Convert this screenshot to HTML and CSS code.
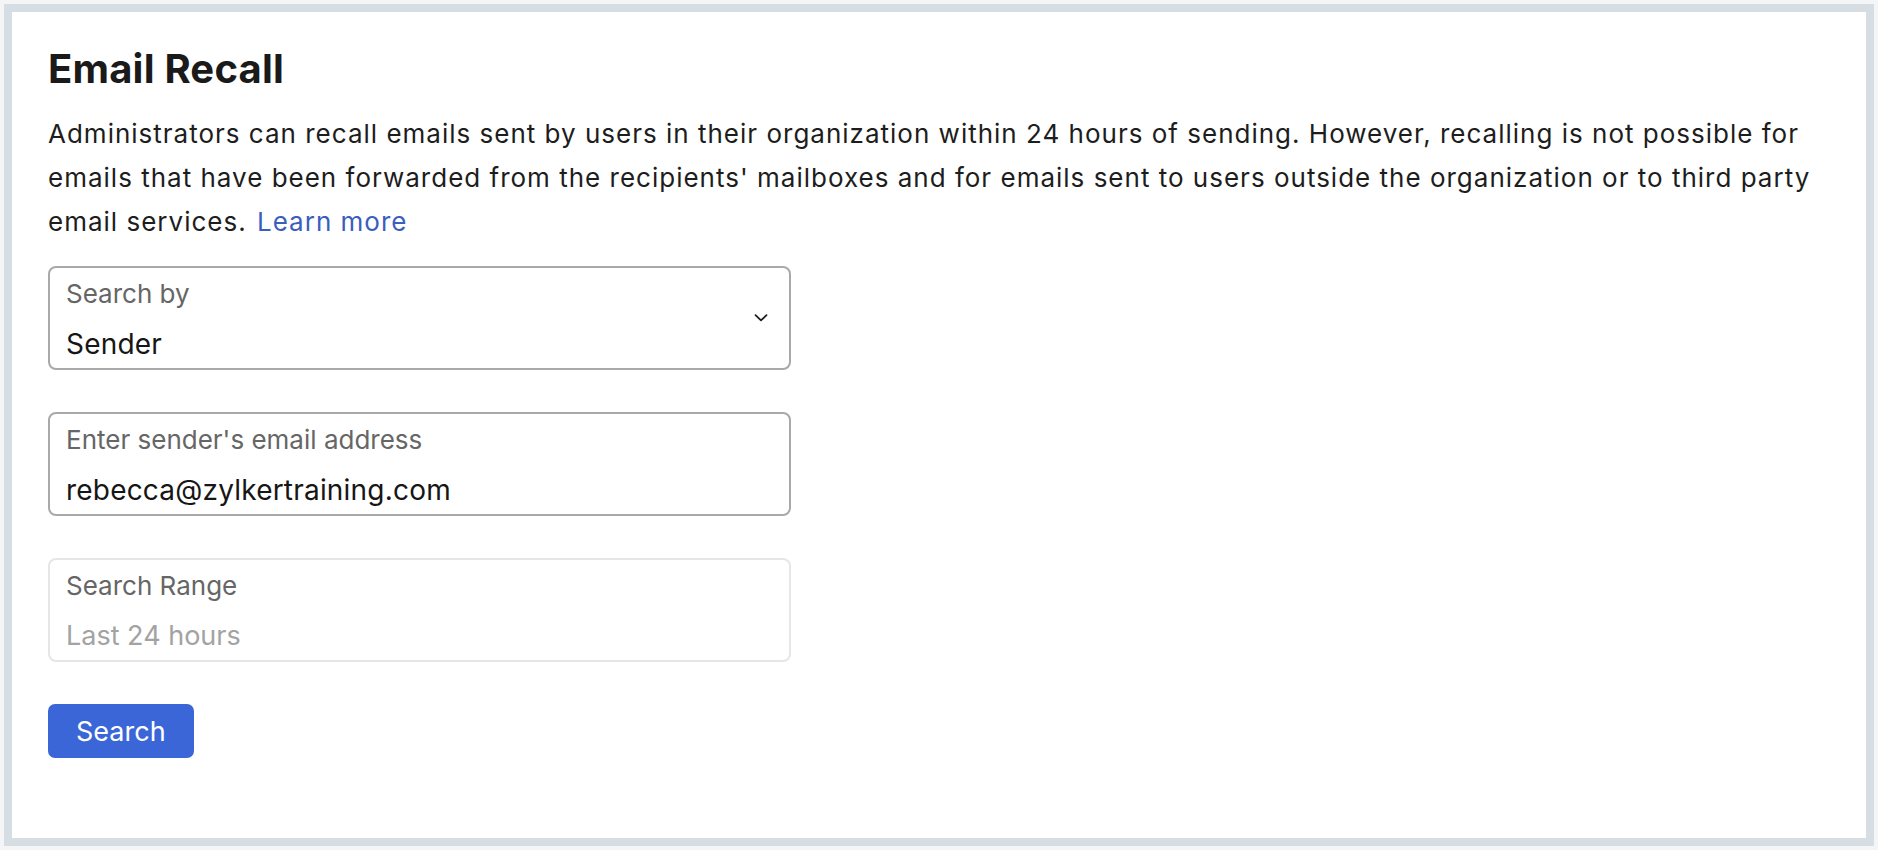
FILE: index.html
```html
<!DOCTYPE html>
<html lang="en">

<head>
    <meta charset="UTF-8">
    <meta name="viewport" content="width=device-width, initial-scale=1.0">
    <title>Email Recall</title>
    <link rel="stylesheet" href="styles.css">
</head>

<body>
    <div class="panel">
        <h1>Email Recall</h1>
        <p class="intro">Administrators can recall emails sent by users in their organization within 24 hours of sending. However, recalling is not possible for emails that have been forwarded from the recipients' mailboxes and for emails sent to users outside the organization or to third party email services. <a href="#" class="learn-more">Learn more</a></p>

        <div class="field field-select">
            <div class="field-body">
                <div class="field-label">Search by</div>
                <div class="field-value">Sender</div>
            </div>
            <svg class="chevron" width="14" height="8" viewBox="0 0 14 8">
                <path d="M1.5 1.2 L7 6.4 L12.5 1.2" fill="none" stroke="#1d1d1d" stroke-width="1.8" stroke-linecap="round" stroke-linejoin="round" />
            </svg>
        </div>

        <div class="field">
            <div class="field-body">
                <div class="field-label">Enter sender's email address</div>
                <div class="field-value">rebecca@zylkertraining.com</div>
            </div>
        </div>

        <div class="field field-disabled">
            <div class="field-body">
                <div class="field-label">Search Range</div>
                <div class="field-value">Last 24 hours</div>
            </div>
        </div>

        <button type="button" class="search-btn">Search</button>
    </div>
</body>

</html>
```

FILE: styles.css
```css
html,
body {
    height: 100%;
}

body {
    font-family: Inter, "Noto Sans", sans-serif;
    background-color: #f3f5f7;
    color: #1b1b1b;
    margin: 0;
    padding: 4px;
    box-sizing: border-box;
}

.panel {
    background-color: #fff;
    border: 8px solid #d6dee4;
    height: 100%;
    box-sizing: border-box;
    padding: 33px 36px;
}

h1 {
    font-size: 40px;
    line-height: 48px;
    font-weight: 700;
    letter-spacing: 0.2px;
    margin: 0 0 19px;
    color: #1a1a1a;
}

.intro {
    font-size: 26px;
    line-height: 44px;
    letter-spacing: 1px;
    margin: 0 0 22px;
    color: #1d1d1d;
}

.learn-more {
    color: #3a5ebd;
    text-decoration: none;
    margin-left: 2px;
}

.field {
    display: flex;
    align-items: center;
    width: 743px;
    height: 104px;
    box-sizing: border-box;
    border: 2px solid #a9a9a9;
    border-radius: 8px;
    padding: 0 21px 0 16px;
    margin-bottom: 42px;
}

.field-body {
    flex: 1;
    align-self: stretch;
    padding-top: 10px;
}

.field-label {
    font-size: 26px;
    line-height: 32px;
    color: #666;
}

.field-value {
    font-size: 28px;
    line-height: 36px;
    letter-spacing: 0.2px;
    margin-top: 16px;
    color: #161616;
}

.field-disabled {
    border: 2px solid #e6e6e6;
}

.field-disabled .field-value {
    font-size: 27px;
    letter-spacing: 0;
    color: #a3a3a3;
}

.chevron {
    flex-shrink: 0;
}

.search-btn {
    font-family: inherit;
    font-size: 27px;
    height: 54px;
    padding: 0 28px;
    background-color: #3b66d7;
    color: #fff;
    border: none;
    border-radius: 7px;
    cursor: pointer;
}

.search-btn:hover {
    background-color: #3258c4;
}
```
